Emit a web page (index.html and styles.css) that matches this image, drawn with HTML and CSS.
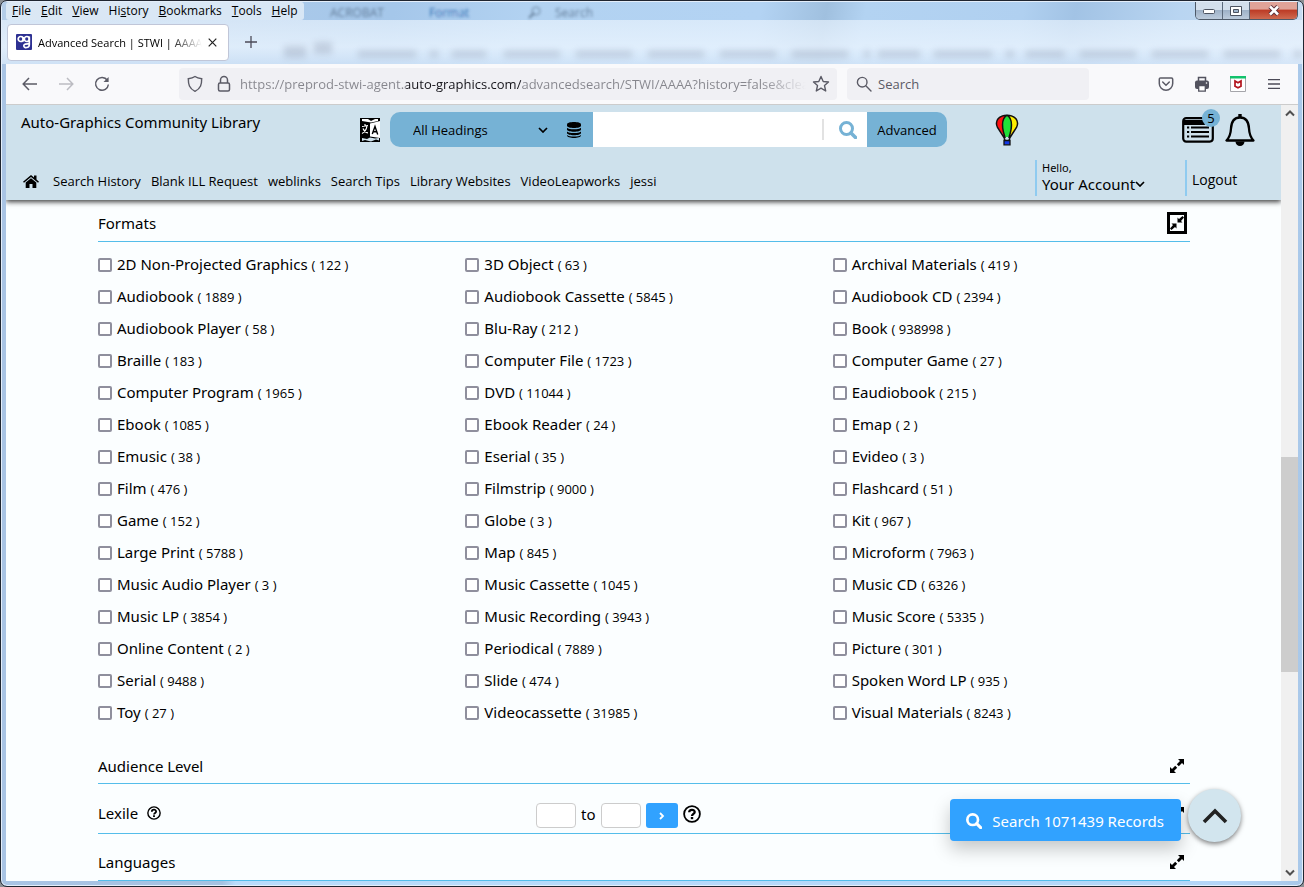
FILE: index.html
```html
<!DOCTYPE html>
<html lang="en">
<head>
<meta charset="utf-8">
<meta name="viewport" content="width=device-width, initial-scale=1">
<title>Advanced Search | STWI | AAAA</title>
<link rel="stylesheet" href="styles.css">
</head>
<body>
<svg class="defs" aria-hidden="true">
  <symbol id="expand" viewBox="0 0 14 14"><path d="M8 0h6v6l-2-2-3.200 3.200-2-2L10 2zM0 8l2 2 3.200-3.200 2 2L4 12l2 2H0z"/></symbol>
  <symbol id="collapse" viewBox="0 0 14 14"><path d="M7.500 1.500l1.500 1.500L12.500 0 14 1.500 11 5l1.500 1.500h-5zM1.500 7.500h5v5L5 11l-3.500 3L0 12.500 3 9z"/></symbol>
  <symbol id="lens" viewBox="0 0 18 18"><circle cx="7.500" cy="7.500" r="6" fill="none" stroke="currentColor" stroke-width="3"/><path d="M12 12l4.500 4.500" stroke="currentColor" stroke-width="3.500" stroke-linecap="round"/></symbol>
  <symbol id="thin-lens" viewBox="0 0 16 16"><circle cx="6.200" cy="6.200" r="4.800" fill="none" stroke="currentColor" stroke-width="1.400"/><path d="M9.800 9.800L15 15" stroke="currentColor" stroke-width="1.400" stroke-linecap="round"/></symbol>
  <symbol id="help" viewBox="0 0 18 18"><circle cx="9" cy="9" r="7.900" fill="none" stroke="currentColor" stroke-width="1.800"/><path d="M6.200 7.300C6.300 4 11.700 4 11.700 7c0 1.900-2.700 1.900-2.700 4" fill="none" stroke="currentColor" stroke-width="2.300"/><path d="M7.800 12h2.400v2.200H7.800z"/></symbol>
  <symbol id="chevron-down" viewBox="0 0 10 6"><path d="M1 1l4 4 4-4" fill="none" stroke="currentColor" stroke-width="1.700"/></symbol>
</svg>
<div class="window">
  <div class="chrome">
    <svg class="glass" width="1300" height="64" aria-hidden="true">
      <defs>
        <filter id="soft" filterUnits="userSpaceOnUse" x="0" y="0" width="1300" height="64"><feGaussianBlur stdDeviation="3"/></filter>
        <filter id="haze" filterUnits="userSpaceOnUse" x="0" y="0" width="1300" height="64"><feGaussianBlur stdDeviation="1.600"/></filter>
      </defs>
      <g filter="url(#haze)" opacity=".75" font-size="12" fill="#49617c">
        <text x="328" y="15">ACROBAT</text><text x="427" y="15" fill="#134d9c">Format</text><text x="553" y="15">Search</text>
        <path d="M527 16l5-5" stroke="#49617c" stroke-width="2"/><circle cx="534" cy="9" r="4" fill="none" stroke="#49617c"/>
      </g>
      <g filter="url(#soft)" stroke="#8792a8" stroke-width="7" opacity=".3">
        <path d="M282 50h22M312 46h18" stroke-width="12"/>
        <path d="M356 52h58M428 52h8M450 52h34M502 52h56M574 52h56M646 52h56M718 52h56M790 52h56M862 52h6M876 52h42M932 52h58M1004 52h8M1024 52h38M1078 52h56M1150 52h56M1222 52h56M1292 52h8"/>
      </g>
    </svg>
    <div class="titlebar">
      <nav class="menubar" aria-label="Menu bar">
        <button><u>F</u>ile</button><button><u>E</u>dit</button><button><u>V</u>iew</button><button>Hi<u>s</u>tory</button><button><u>B</u>ookmarks</button><button><u>T</u>ools</button><button><u>H</u>elp</button>
      </nav>
      <div class="caption">
        <button class="cap" aria-label="Minimize"><svg width="14" height="8" viewBox="0 0 14 8"><rect x="1.500" y="2.500" width="11" height="4" rx="1" fill="#fff" stroke="#4c5360"/></svg></button>
        <button class="cap" aria-label="Maximize"><svg width="12" height="10" viewBox="0 0 12 10"><path d="M.5.500h11v9H.5z" fill="#fff" stroke="#4c5360"/><path d="M3.500 3.500h5v3h-5z" fill="#9fb4cb" stroke="#4c5360"/></svg></button>
        <button class="cap cap-close" aria-label="Close"><svg width="14" height="11" viewBox="0 0 14 11"><path d="M3 1.500l8 8M11 1.500l-8 8" stroke="#59303a" stroke-width="4.500"/><path d="M3 1.500l8 8M11 1.500l-8 8" stroke="#fff" stroke-width="2.600"/></svg></button>
      </div>
    </div>
    <div class="tabs">
      <div class="tab">
        <svg width="16" height="16" viewBox="0 0 16 16"><rect width="16" height="16" rx="1" fill="#2d3092"/><g fill="none" stroke="#fff" stroke-width="1.700"><circle cx="4.700" cy="5" r="2.500"/><circle cx="10.800" cy="5" r="2.500"/><path d="M7.300 3v4.500M13.300 2.500v8.200c0 3.600-5.500 3.600-5.500 1 0-2.100 3-1.800 5.500-1.800"/></g></svg>
        <span class="tab-title">Advanced Search | STWI | AAAA</span>
        <button class="icon-btn" aria-label="Close tab"><svg width="9" height="9" viewBox="0 0 9 9"><path d="M.7.700l7.600 7.600M8.300.700L.7 8.300" stroke="#222" stroke-width="1.200"/></svg></button>
      </div>
      <button class="icon-btn" aria-label="New tab"><svg width="12" height="12" viewBox="0 0 12 12"><path d="M6 0v12M0 6h12" stroke="#4c4b58" stroke-width="1.300"/></svg></button>
    </div>
  </div>
  <div class="toolbar">
    <div class="history">
      <button class="icon-btn" aria-label="Back"><svg width="16" height="14" viewBox="0 0 16 14" fill="none" stroke="#5b5b66" stroke-width="1.500"><path d="M15 7H1.500M7 1L1.200 7 7 13"/></svg></button>
      <button class="icon-btn" aria-label="Forward"><svg width="16" height="14" viewBox="0 0 16 14" fill="none" stroke="#bcbcc2" stroke-width="1.500"><path d="M1 7h13.500M9 1l5.800 6L9 13"/></svg></button>
      <button class="icon-btn" aria-label="Reload"><svg width="16" height="16" viewBox="0 0 16 16" fill="none" stroke="#5b5b66" stroke-width="1.500"><path d="M13.300 4.200A6.400 6.400 0 1 0 14.400 8.500"/><path d="M14.600 1v5H9.500z" fill="#5b5b66" stroke="none"/></svg></button>
    </div>
    <div class="urlbar">
      <svg width="16" height="18" viewBox="0 0 16 18" fill="none" stroke="#5b5b66" stroke-width="1.400"><path d="M8 1.500c2 1.500 4.500 2 6.700 2.200 0 5.500-.8 9.700-6.700 12.600C2.100 13.400 1.300 9.200 1.300 3.700 3.500 3.500 6 3 8 1.500z"/></svg>
      <svg width="14" height="18" viewBox="0 0 14 18" fill="none" stroke="#5b5b66" stroke-width="1.500"><rect x="1.500" y="8" width="11" height="8" rx="1.500"/><path d="M3.500 8V5a3.500 3.500 0 0 1 7 0v3"/></svg>
      <input class="url" type="text" aria-label="Address" value="https://preprod-stwi-agent.auto-graphics.com/advancedsearch/STWI/AAAA?history=false&amp;clear=true">
      <button class="icon-btn" aria-label="Bookmark this page"><svg width="18" height="18" viewBox="0 0 18 18" fill="none" stroke="#5b5b66" stroke-width="1.400" stroke-linejoin="round"><path d="M9 1.500l2.200 5 5.300.500-4 3.600 1.200 5.400L9 13.200 4.300 16l1.200-5.400-4-3.600 5.300-.500z"/></svg></button>
    </div>
    <label class="quick"><svg width="16" height="16" color="#5b5b66"><use href="#thin-lens"/></svg><input type="text" placeholder="Search" aria-label="Search the web"></label>
    <div class="tools">
      <button class="icon-btn" aria-label="Save to Pocket"><svg width="16" height="14" viewBox="0 0 16 14" fill="none" stroke="#5b5b66" stroke-width="1.500"><path d="M2.500 1h11c.7 0 1.200.500 1.200 1.200V6.500a6.700 6.700 0 0 1-13.400 0V2.200C1.300 1.500 1.800 1 2.500 1z"/><path d="M4.700 5L8 8.200 11.300 5" stroke-linecap="round"/></svg></button>
      <button class="icon-btn" aria-label="Print"><svg width="16" height="16" viewBox="0 0 16 16"><path d="M4.500 5V1.500h7V5" fill="none" stroke="#52525e" stroke-width="1.500"/><rect x="1" y="4.500" width="14" height="8.500" rx="2" fill="#52525e"/><path d="M4.700 9.500h6.600v5.700H4.700z" fill="#fff" stroke="#52525e" stroke-width="1.300"/><circle cx="12.500" cy="7" r=".8" fill="#fff"/></svg></button>
      <button class="icon-btn" aria-label="Antivirus"><svg width="16" height="16" viewBox="0 0 16 16"><path d="M.5.500h15v15H.5z" fill="#fff" stroke="#a5a5aa"/><path d="M0 0h16v2.500H0z" fill="#12c26c"/><path d="M5 5v5.200L8 11.700l3-1.500V5L8 6.800z" fill="none" stroke="#b3151e" stroke-width="1.700"/></svg></button>
      <button class="icon-btn" aria-label="Open menu"><svg width="16" height="10" viewBox="0 0 16 10"><path d="M2 .7h12M2 5h12M2 9.300h12" stroke="#4c4b58" stroke-width="1.300"/></svg></button>
    </div>
  </div>
  <div class="viewport">
    <div class="page">
      <header class="site-header">
        <div class="header-top">
          <div class="brand">Auto-Graphics Community Library</div>
          <button class="icon-btn lang" aria-label="Translate"><svg width="20" height="24" viewBox="0 0 20 24"><path d="M0 0h20v24H0z"/><path d="M2 1h6l3 2 4-2h3v2l-7 1.500L2 3zM10 5.500L20 3v17l-10-1.500z" fill="#fff"/><path d="M2 20l5 1 3-1.500 5 1 4-.500v2.500l-3-1-5 2-6-1.500-3 1z" fill="#cfe2ed"/><path d="M2 8.500l6-1M5 6v2M7 8c-.5 3-2 6-5 7.500M3 10.500c1 2.500 3 4 5 4.500" stroke="#fff" stroke-width="1.200" fill="none"/><path d="M12.300 16L15 8.500l2.700 8M13.300 13.800h3.600" stroke="#000" stroke-width="1.400" fill="none"/></svg></button>
          <form class="search" onsubmit="return false">
            <div class="scope">
              <select aria-label="Search in"><option>All Headings</option><option>Title</option><option>Author</option></select>
              <svg class="caret" width="10" height="6"><use href="#chevron-down"/></svg>
              <button type="button" class="icon-btn" aria-label="Databases"><svg width="14" height="16" viewBox="0 0 14 16"><path d="M0 2.500C0-.700 14-.700 14 2.500v1.300c0 3-14 3-14 0z"/><path d="M0 5.800c2 2 12 2 14 0v1.700c0 3-14 3-14 0zM0 9.400c2 2 12 2 14 0v1.700c0 3-14 3-14 0zM0 13c2 2 12 2 14 0v.500c0 3.300-14 3.300-14 0z"/></svg></button>
            </div>
            <input class="query" type="text" aria-label="Search terms">
            <button class="go" aria-label="Search"><svg width="18" height="18"><use href="#lens"/></svg></button>
            <button type="button" class="advanced">Advanced</button>
          </form>
          <svg class="balloon" width="24" height="32" viewBox="0 0 24 32"><path d="M9 22l-6.500-9C-1 6 5 1 12 1s13 5 9.500 12L15 22z" fill="#f11"/><path d="M12 1c7 0 13 5 9.500 12L15 22h-3z" fill="#fe0"/><path d="M12 1C5.500 5 7.500 16 10.500 23h3C16.500 16 18.500 5 12 1z" fill="#1fe038"/><path d="M9 23.500l-6.500-10C-1 6 5 1.200 12 1.200s13 4.800 9.500 12.300l-6.500 10M12 1.200C5.500 5 7.500 16 10.200 24M12 1.200C18.500 5 16.500 16 13.800 24M9 23l1 4M15 23l-1 4" fill="none" stroke="#111" stroke-width="1.500"/><path d="M9 26.500h6v4.300H9z" fill="#1238e8" stroke="#111" stroke-width="1.300"/></svg>
          <div class="alerts">
            <button class="icon-btn lists" aria-label="My lists, 5"><svg width="32" height="26" viewBox="0 0 32 26"><rect x="1.200" y="1.200" width="29.600" height="23.400" rx="3" fill="none" stroke="#000" stroke-width="2.200"/><path d="M1 3h30v5H1z"/><path d="M9 10.500h18M9 15h18M9 19.500h18" stroke="#000" stroke-width="2"/><path d="M5 10.500h2.200M5 15h2.200M5 19.500h2.200" stroke="#000" stroke-width="2"/></svg><span class="badge">5</span></button>
            <button class="icon-btn" aria-label="Notifications"><svg width="30" height="32" viewBox="0 0 30 32"><path d="M15 3.500c-7 0-8.700 5.500-9 11-.3 6-1.700 9-4.500 12h27c-2.800-3-4.200-6-4.500-12-.3-5.500-2-11-9-11z" fill="none" stroke="#000" stroke-width="2.300" stroke-linejoin="round"/><path d="M13.300 0h3.400v4h-3.400zM10.500 27.500h9a4.500 4.500 0 0 1-9 0z"/></svg></button>
          </div>
        </div>
        <div class="header-nav">
          <nav class="links" aria-label="Main">
            <a class="home" href="#" aria-label="Home"><svg width="16" height="13" viewBox="0 0 16 13"><path d="M8 0l3 2.500V.500h2.500v4L16 6.700l-1 1L8 2 1 7.700l-1-1z"/><path d="M8 3.200l5.300 4.400V13H9.500V9h-3v4H2.700V7.600z"/></svg></a>
            <a href="#">Search History</a><a href="#">Blank ILL Request</a><a href="#">weblinks</a><a href="#">Search Tips</a><a href="#">Library Websites</a><a href="#">VideoLeapworks</a><a href="#">jessi</a>
          </nav>
          <button class="account"><span class="hello">Hello,</span><span class="who">Your Account<svg width="10" height="6"><use href="#chevron-down"/></svg></span></button>
          <a class="logout" href="#">Logout</a>
        </div>
      </header>
      <main class="content">
        <section>
          <div class="section-head first"><h2>Formats</h2><button class="toggle boxed" aria-label="Collapse Formats"><svg width="14" height="14"><use href="#collapse"/></svg></button></div>
          <div class="formats">
            <label><input type="checkbox">2D Non-Projected Graphics <small>( 122 )</small></label>
            <label><input type="checkbox">3D Object <small>( 63 )</small></label>
            <label><input type="checkbox">Archival Materials <small>( 419 )</small></label>
            <label><input type="checkbox">Audiobook <small>( 1889 )</small></label>
            <label><input type="checkbox">Audiobook Cassette <small>( 5845 )</small></label>
            <label><input type="checkbox">Audiobook CD <small>( 2394 )</small></label>
            <label><input type="checkbox">Audiobook Player <small>( 58 )</small></label>
            <label><input type="checkbox">Blu-Ray <small>( 212 )</small></label>
            <label><input type="checkbox">Book <small>( 938998 )</small></label>
            <label><input type="checkbox">Braille <small>( 183 )</small></label>
            <label><input type="checkbox">Computer File <small>( 1723 )</small></label>
            <label><input type="checkbox">Computer Game <small>( 27 )</small></label>
            <label><input type="checkbox">Computer Program <small>( 1965 )</small></label>
            <label><input type="checkbox">DVD <small>( 11044 )</small></label>
            <label><input type="checkbox">Eaudiobook <small>( 215 )</small></label>
            <label><input type="checkbox">Ebook <small>( 1085 )</small></label>
            <label><input type="checkbox">Ebook Reader <small>( 24 )</small></label>
            <label><input type="checkbox">Emap <small>( 2 )</small></label>
            <label><input type="checkbox">Emusic <small>( 38 )</small></label>
            <label><input type="checkbox">Eserial <small>( 35 )</small></label>
            <label><input type="checkbox">Evideo <small>( 3 )</small></label>
            <label><input type="checkbox">Film <small>( 476 )</small></label>
            <label><input type="checkbox">Filmstrip <small>( 9000 )</small></label>
            <label><input type="checkbox">Flashcard <small>( 51 )</small></label>
            <label><input type="checkbox">Game <small>( 152 )</small></label>
            <label><input type="checkbox">Globe <small>( 3 )</small></label>
            <label><input type="checkbox">Kit <small>( 967 )</small></label>
            <label><input type="checkbox">Large Print <small>( 5788 )</small></label>
            <label><input type="checkbox">Map <small>( 845 )</small></label>
            <label><input type="checkbox">Microform <small>( 7963 )</small></label>
            <label><input type="checkbox">Music Audio Player <small>( 3 )</small></label>
            <label><input type="checkbox">Music Cassette <small>( 1045 )</small></label>
            <label><input type="checkbox">Music CD <small>( 6326 )</small></label>
            <label><input type="checkbox">Music LP <small>( 3854 )</small></label>
            <label><input type="checkbox">Music Recording <small>( 3943 )</small></label>
            <label><input type="checkbox">Music Score <small>( 5335 )</small></label>
            <label><input type="checkbox">Online Content <small>( 2 )</small></label>
            <label><input type="checkbox">Periodical <small>( 7889 )</small></label>
            <label><input type="checkbox">Picture <small>( 301 )</small></label>
            <label><input type="checkbox">Serial <small>( 9488 )</small></label>
            <label><input type="checkbox">Slide <small>( 474 )</small></label>
            <label><input type="checkbox">Spoken Word LP <small>( 935 )</small></label>
            <label><input type="checkbox">Toy <small>( 27 )</small></label>
            <label><input type="checkbox">Videocassette <small>( 31985 )</small></label>
            <label><input type="checkbox">Visual Materials <small>( 8243 )</small></label>
          </div>
        </section>
        <section><div class="section-head"><h2>Audience Level</h2><button class="toggle" aria-label="Expand Audience Level"><svg width="14" height="14"><use href="#expand"/></svg></button></div></section>
        <section><div class="section-head lexile"><h2>Lexile <svg width="14" height="14"><use href="#help"/></svg></h2>
          <div class="range"><input type="text" aria-label="Lexile from"><span>to</span><input type="text" aria-label="Lexile to"><button class="apply" aria-label="Apply"><svg width="6" height="8" viewBox="0 0 6 8"><path d="M1 1l3 3-3 3" fill="none" stroke="#fff" stroke-width="1.800"/></svg></button><button class="icon-btn" aria-label="Lexile help"><svg width="18" height="18"><use href="#help"/></svg></button></div>
          <button class="toggle" aria-label="Expand Lexile"><svg width="14" height="14"><use href="#expand"/></svg></button></div></section>
        <section><div class="section-head languages"><h2>Languages</h2><button class="toggle" aria-label="Expand Languages"><svg width="14" height="14"><use href="#expand"/></svg></button></div></section>
      </main>
    </div>
    <div class="scrollbar" aria-hidden="true">
      <div class="arrow"><svg width="10" height="7" viewBox="0 0 10 7"><path d="M1 5.500l4-4 4 4" fill="none" stroke="#505050" stroke-width="2"/></svg></div>
      <div class="above"></div><div class="thumb"></div><div class="below"></div>
      <div class="arrow"><svg width="10" height="7" viewBox="0 0 10 7"><path d="M1 1.500l4 4 4-4" fill="none" stroke="#505050" stroke-width="2"/></svg></div>
    </div>
    <div class="floating">
      <button class="search-records"><svg width="16" height="16" viewBox="0 0 18 18"><use href="#lens"/></svg>Search 1071439 Records</button>
      <button class="to-top" aria-label="Back to top"><svg width="26" height="16" viewBox="0 0 26 16"><path d="M2 14L13 3l11 11" fill="none" stroke="#222" stroke-width="3.600"/></svg></button>
    </div>
  </div>
</div>
</body>
</html>
```
FILE: styles.css
```css
* { box-sizing: border-box; }
body {
  margin: 0;
  background: #8b8f94;
  color: #000;
  font-family: "Noto Sans", "Open Sans", sans-serif;
  font-size: 15px;
}
button, input, select { font: inherit; color: inherit; }
button { border: 0; padding: 0; background: none; cursor: pointer; }
a { color: inherit; text-decoration: none; }
svg { display: block; flex: none; }
.defs { position: absolute; width: 0; height: 0; }
.icon-btn { display: flex; align-items: center; justify-content: center; }
.chrome, .toolbar, .search, .header-nav, .formats small { font-family: "Open Sans", "Noto Sans", sans-serif; }

/* Window frame */
.window {
  display: flex;
  flex-direction: column;
  height: 100vh;
  padding: 0 5px 5px;
  border: 1px solid #1f2530;
  border-radius: 7px;
  background: linear-gradient(90deg, #a9c4e4, #a5c2e2 17%, #b9dcfb 18%, #b4d6f8 94%, #a9c8e9);
  box-shadow: inset 0 0 0 1px #e4eefa;
  overflow: hidden;
}
.chrome {
  position: relative;
  margin: 1px -4px 0;
  padding: 0 4px;
  background:
    linear-gradient(180deg, transparent 18px, rgba(235, 244, 253, .65) 18px, rgba(235, 245, 255, .8) 45px, rgba(219, 234, 250, .7) 62px),
    linear-gradient(100deg, #b4cde8 0, #a5c7ea 30%, #b2d2f1 40%, #b3d3f3 58%, #a0c0df 63%, #b3d3f2 66%, #b0d0f0 78%, #a2c3e5 82%, #b9d5f1 90%, #c8dcf2 100%);
}
.glass { position: absolute; left: 0; top: 0; max-width: 100%; pointer-events: none; }
.titlebar { position: relative; display: flex; justify-content: space-between; height: 18px; }
.menubar {
  display: flex;
  align-items: center;
  gap: 10px;
  padding: 0 6px;
  border-radius: 3px;
  background: rgba(232, 240, 248, .75);
  font-size: 12px;
  line-height: 16px;
}
.menubar u { text-underline-offset: 1px; }
.caption {
  display: flex;
  height: 18px;
  border: 1px solid #4d5968;
  border-top: 0;
  border-radius: 0 0 5px 5px;
  overflow: hidden;
}
.cap {
  display: flex;
  align-items: center;
  justify-content: center;
  width: 27px;
  border-right: 1px solid #5c6a7c;
  background: linear-gradient(#d3dfec 45%, #9fb2c8 50%, #bccbdc);
}
.cap-close { width: 47px; border-right: 0; background: linear-gradient(#e0a398 40%, #bd3d27 50%, #cf6a50); }
.tabs { position: relative; display: flex; align-items: center; gap: 16px; height: 44px; padding: 0 1px; }
.tab {
  display: flex;
  align-items: center;
  gap: 6px;
  width: 222px;
  height: 37px;
  padding: 0 11px 0 8px;
  border: 1px solid #c0c6d8;
  border-radius: 4px;
  background: #fff;
  font-size: 11px;
}
.tab-title {
  flex: 1;
  overflow: hidden;
  white-space: nowrap;
  mask-image: linear-gradient(90deg, #000 80%, transparent);
}

/* Browser toolbar */
.toolbar {
  display: flex;
  align-items: center;
  gap: 10px;
  height: 41px;
  flex: none;
  padding-right: 16px;
  border-bottom: 1px solid #ccc;
  background: #f9f9fb;
}
.history { display: flex; gap: 20px; width: 163px; padding-left: 16px; }
.urlbar, .quick { display: flex; align-items: center; height: 32px; border-radius: 4px; background: #f0f0f4; font-size: 13px; }
.urlbar { flex: 0 1 658px; gap: 14px; padding: 0 7px 0 8px; min-width: 0; }
.urlbar .url {
  flex: 1;
  min-width: 0;
  margin: 0 -8px 0 -5px;
  padding: 0;
  border: 0;
  outline: 0;
  color: transparent;
  background: linear-gradient(90deg, #85858c 166px, #15141a 166px 281px, #85858c 281px 92%, transparent);
  -webkit-background-clip: text;
  background-clip: text;
}
.quick { flex: 0 1 242px; gap: 6px; padding: 0 9px; }
.quick input { flex: 1; min-width: 0; padding: 0; border: 0; outline: 0; background: none; }
.quick input::placeholder { color: #5b5b66; opacity: 1; }
.tools { display: flex; align-items: center; gap: 20px; margin-left: auto; }

/* Page */
.viewport { position: relative; display: flex; flex: 1; min-height: 0; background: #fbfeff; }
.page { flex: 1; min-width: 0; overflow-y: auto; scrollbar-width: none; }
.site-header {
  position: sticky;
  top: 0;
  z-index: 1;
  display: flex;
  flex-direction: column;
  justify-content: space-between;
  height: 95px;
  background: #cee1ec;
  box-shadow: 0 2px 5px rgba(0, 0, 0, .75);
}
.header-top { display: flex; align-items: center; padding: 7px 26px 0 15px; }
.brand { flex: 0 0 339px; align-self: flex-start; line-height: 20px; }
.lang { margin-right: 10px; }
.search { display: flex; flex: 0 1 557px; height: 35px; border-radius: 10px; overflow: hidden; font-size: 13px; }
.scope { position: relative; display: flex; align-items: center; width: 203px; padding-right: 12px; background: #76b2d5; }
.scope select { flex: 1; height: 35px; padding: 0 0 0 23px; border: 0; outline: 0; background: none; appearance: none; }
.caret { margin-right: 19px; pointer-events: none; }
.query { flex: 1; min-width: 0; padding: 0 12px; border: 0; outline: 0; background: #fff; }
.go { display: flex; align-items: center; width: 45px; color: #76b2d5; background: #fff; }
.go svg { margin-left: 15px; }
.go::before { content: ""; width: 2px; height: 21px; background: #e2e2e2; }
.advanced { width: 80px; background: #76b2d5; }
.balloon { margin-left: 48px; }
.alerts { display: flex; gap: 11px; margin-left: auto; }
.lists { position: relative; }
.badge {
  position: absolute;
  right: -6px;
  top: -5px;
  width: 18px;
  height: 18px;
  border-radius: 50%;
  background: #76b2d5;
  font-size: 13px;
  line-height: 18px;
}
.header-nav { display: flex; align-items: center; height: 42px; padding-bottom: 2px; font-size: 13px; }
.links { display: flex; align-items: center; gap: 10px; margin-right: auto; padding: 6px 0 0 17px; }
.home { margin-right: 4px; }
.account, .logout { height: 36px; padding-left: 5px; border-left: 2px solid #8fcbf0; }
.account { width: 150px; padding-bottom: 3px; text-align: left; font-family: "Noto Sans", sans-serif; }
.hello { display: block; font-size: 11px; line-height: 14px; }
.who { display: flex; align-items: center; font-size: 15px; line-height: 18px; }
.logout { width: 96px; font-size: 14px; line-height: 40px; }

.content { padding: 0 91px 0 92px; }
.section-head {
  display: flex;
  align-items: center;
  justify-content: space-between;
  height: 34px;
  padding: 0 6px 2px 0;
  border-bottom: 1px solid #54bdea;
}
.section-head.first { height: 42px; padding: 5px 3px 0 0; }
.section-head.lexile { height: 50px; padding: 14px 6px 0 0; }
.section-head.languages { height: 47px; padding-top: 11px; }
h2 { display: flex; align-items: center; gap: 9px; margin: 0; font-size: 15px; font-weight: 400; line-height: 20px; }
.toggle { display: flex; align-items: center; justify-content: center; }
.boxed { width: 20px; height: 22px; border: 3px solid #000; }
.formats {
  display: grid;
  grid-template-columns: repeat(3, 1fr);
  column-gap: 10px;
  padding: 6px 0 22px;
  line-height: 32px;
}
.formats label { display: flex; align-items: center; height: 32px; white-space: nowrap; }
.formats small { margin: 2px 0 0 4px; font-size: 13px; }
.formats input {
  appearance: none;
  width: 14px;
  height: 14px;
  margin: 2px 5px 0 0;
  border: 2px solid #8f8f9d;
  border-radius: 2px;
  background: #fff;
}
.formats input:checked { background: #31a2ff; }
.lexile h2 { width: 438px; padding-bottom: 5px; }
.lexile .toggle { padding-bottom: 4px; }
.range { display: flex; align-items: center; gap: 5px; margin-right: auto; }
.range span { padding-bottom: 4px; }
.range .icon-btn { padding-bottom: 3px; }
.range input { width: 40px; height: 25px; padding: 0 4px; border: 1px solid #ccc; border-radius: 4px; background: #fff; }
.apply { display: flex; align-items: center; justify-content: center; width: 32px; height: 25px; border-radius: 3px; background: #31a2ff; }

/* Scrollbar */
.scrollbar { display: flex; flex-direction: column; width: 17px; background: #f0f0f0; }
.arrow { display: flex; align-items: center; justify-content: center; height: 17px; }
.above { flex: 335; }
.thumb { flex: 215; background: #cdcdcd; }
.below { flex: 192; }

/* Floating actions */
.floating { position: absolute; z-index: 2; right: 57px; bottom: 39px; display: flex; align-items: center; gap: 7px; }
.search-records {
  display: flex;
  align-items: center;
  gap: 10px;
  height: 42px;
  margin-top: 8px;
  padding: 3px 17px 0 16px;
  border-radius: 4px;
  background: #31a2ff;
  color: #fff;
  box-shadow: 0 8px 18px rgba(0, 0, 0, .22);
}
.to-top {
  display: flex;
  align-items: center;
  justify-content: center;
  width: 53px;
  height: 53px;
  border-radius: 50%;
  background: #d2e5ee;
  box-shadow: 0 2px 5px rgba(0, 0, 0, .5);
}
```
